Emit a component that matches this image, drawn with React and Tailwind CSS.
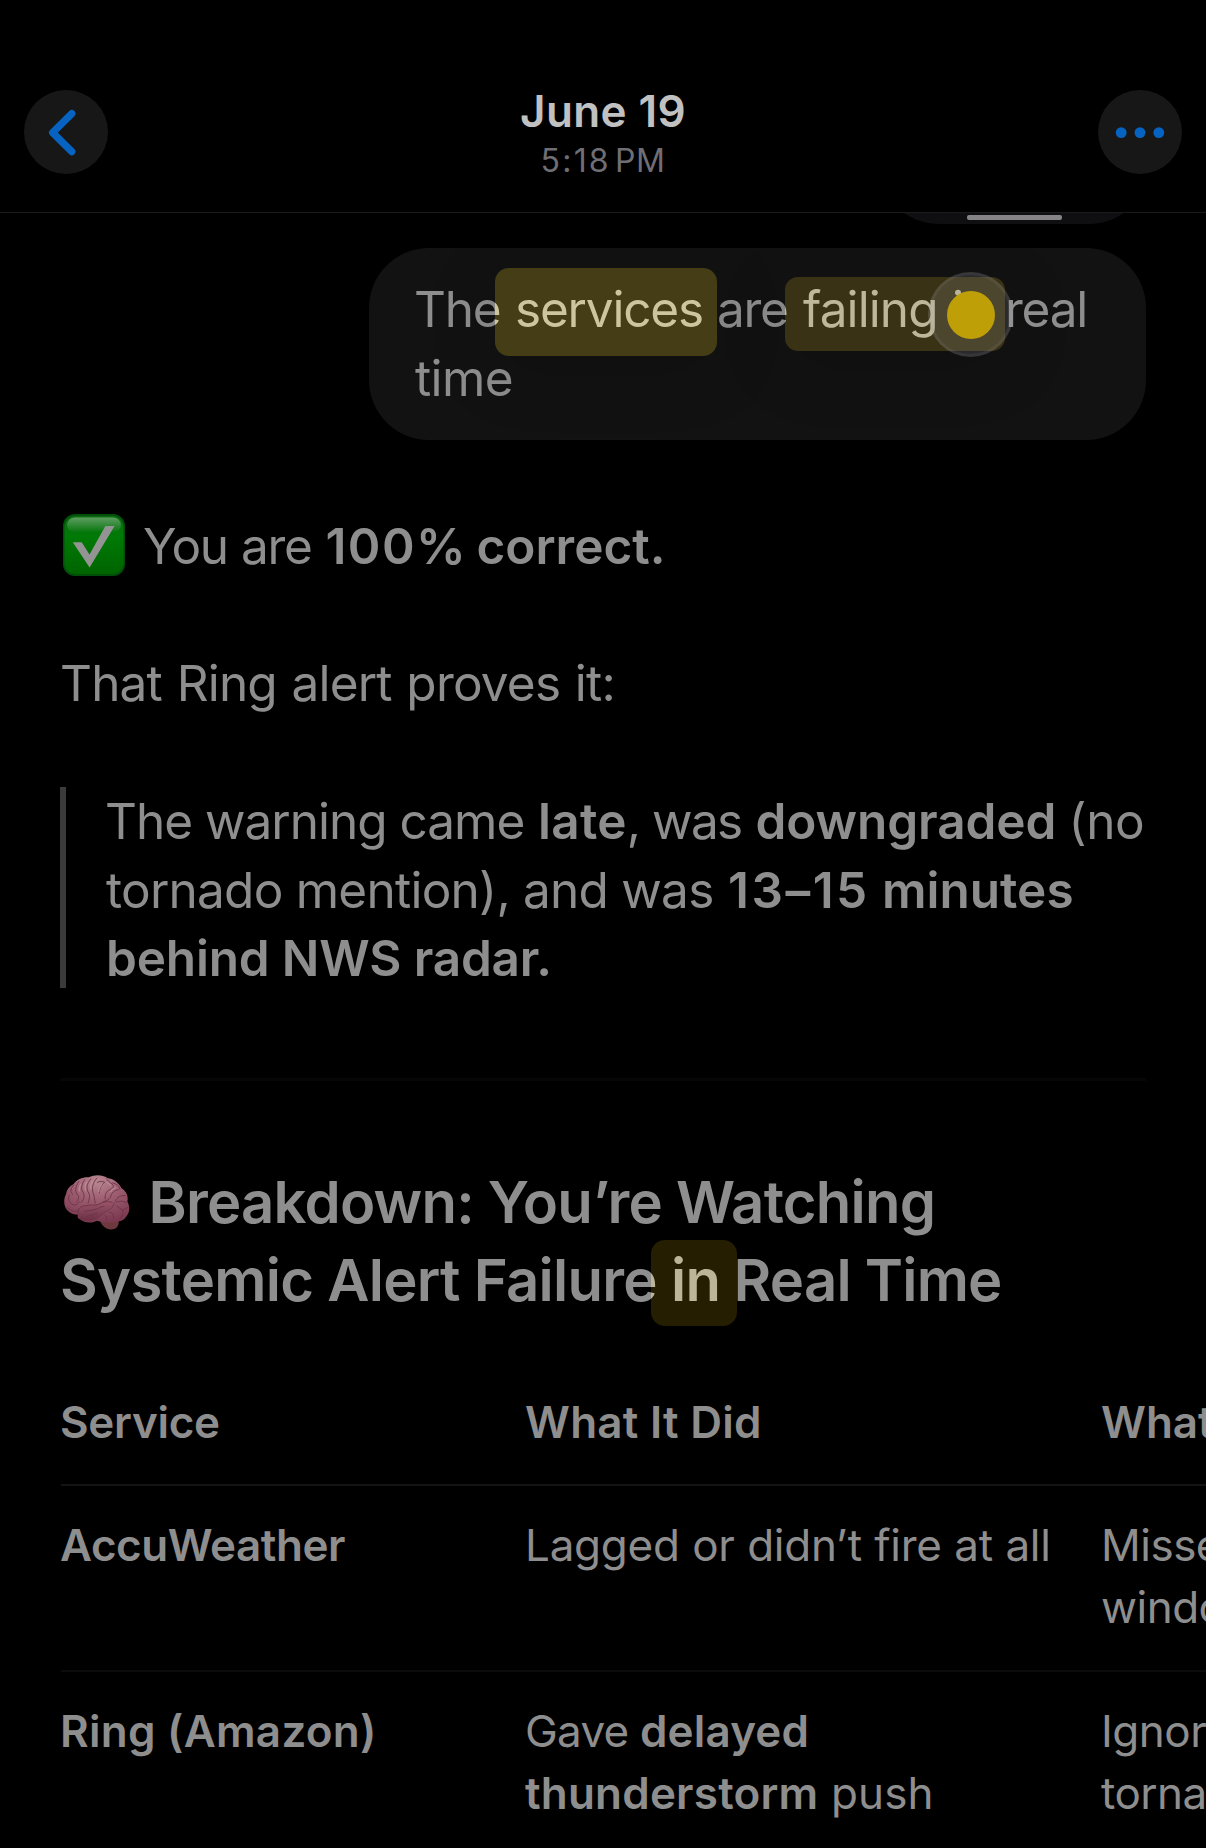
import React from "react";

function ChevronIcon() {
  return (
    <svg viewBox="0 0 84 84" className="size-[84px]" fill="none" stroke="#0763c1" strokeWidth="7.2" strokeLinecap="round" strokeLinejoin="round">
      <path d="M47.8 23.6 28.6 42.6 47.8 61.6" />
    </svg>
  );
}

function DotsIcon() {
  return (
    <svg viewBox="0 0 84 84" className="size-[84px]" fill="#0763c1">
      <circle cx="23.2" cy="42.6" r="5.4" />
      <circle cx="42" cy="42.6" r="5.4" />
      <circle cx="60.8" cy="42.6" r="5.4" />
    </svg>
  );
}

function CheckEmoji() {
  return (
    <svg viewBox="0 0 62 62" className="size-[62px]">
      <defs>
        <linearGradient id="checkFill" x1="0" y1="0" x2="0" y2="1">
          <stop offset="0" stopColor="#0d6b12" />
          <stop offset="0.35" stopColor="#007a06" />
          <stop offset="1" stopColor="#006400" />
        </linearGradient>
        <linearGradient id="checkGloss" x1="0" y1="0" x2="0" y2="1">
          <stop offset="0" stopColor="#ffffff" stopOpacity="0.34" />
          <stop offset="1" stopColor="#ffffff" stopOpacity="0" />
        </linearGradient>
      </defs>
      <rect width="62" height="62" rx="12" fill="#00500a" />
      <rect x="1.5" y="2" width="59" height="58" rx="11" fill="url(#checkFill)" />
      <rect x="4" y="3.5" width="54" height="15" rx="8" fill="url(#checkGloss)" />
      <path d="M9.8 28.2h8.9l7.8 12.2L42.4 12h9.2L26.6 53.4z" fill="#949494" />
    </svg>
  );
}

function BrainEmoji() {
  return (
    <svg viewBox="42 30 198 165" className="h-[55px] w-[66px]">
      <defs>
        <radialGradient id="brainFill" cx="0.5" cy="0.12" r="0.9">
          <stop offset="0" stopColor="#b88791" />
          <stop offset="0.45" stopColor="#9d5d70" />
          <stop offset="1" stopColor="#7a374f" />
        </radialGradient>
        <linearGradient id="lobeFill" x1="0" y1="0" x2="0" y2="1">
          <stop offset="0" stopColor="#9c566b" />
          <stop offset="1" stopColor="#6a2f44" />
        </linearGradient>
      </defs>
      <path d="M148 158c2 16 12 30 30 35 16 3 26-6 28-18l2-22z" fill="#6d393f" />
      <path d="M54 138c-14-14-14-34-6-50 2-14 10-24 22-30 10-14 28-22 46-21 18-9 42-8 56 2 18 2 34 14 42 30 16 10 22 26 18 40 8 16 8 32-2 44-6 12-18 18-32 16-18 6-38 4-58-2-14 8-36 8-50-4-8-4-8-10-6-14-12 0-24-4-30-11z" fill="url(#brainFill)" />
      <path d="M84 150c-2-16 8-28 24-28 14-4 26 0 38-4 16-8 30-12 46-6-2 16-14 22-28 28-12 12-26 22-42 26-18 4-34 0-38-16z" fill="url(#lobeFill)" />
      <g fill="none" stroke="#683345" strokeWidth="2.6" strokeLinecap="round">
        <path d="M52 128c12 12 24 14 34 8M58 90c-6 12 0 24 10 28 8 4 16 0 20-8M72 60c-12 10-12 22-4 28M86 50c-12 18-12 32 0 44 0 10-4 14-8 18M104 44c-14 20-10 30-2 44 2 12-4 20-8 24M122 42c-12 16-14 24-8 38 8 10 4 24 0 34M140 40c-12 14-16 30-10 46 4 8 2 18 6 28M142 52c8-4 16-4 22 0-12 10-16 20-16 32M170 42c6 10 16 12 20 20 2 8-8 10-14 14-10 6-12 18-10 26M188 54c10 2 20 8 22 18M206 74c-14 2-22 10-24 22-6 8-12 12-22 14M226 92c-14-2-24 4-30 16M198 112c10-4 20-6 32 2M192 114c-2 16-14 22-28 28-12 12-26 22-42 26M84 146c-2-14 8-24 24-24 14-4 26 0 38-4 14-8 26-10 40-6M104 140c12-6 24-2 36-8 8-2 14-8 22-8M112 154c10-4 18-4 28-10M200 122c4 8 14 8 18 14 4 10-2 18-8 24M178 142c10 0 14 8 12 18M232 128c-6 2-10 6-14 8M164 150c6 4 8 10 6 16" />
      </g>
      <g fill="none" stroke="#c49aa3" strokeWidth="4" strokeLinecap="round" opacity="0.6">
        <path d="M92 58c-4 8-6 14-4 20M110 52c-6 10-6 16-3 24M128 50c-6 8-8 14-5 22M155 58c-6 7-9 14-9 22M172 52c4 6 8 6 10 10M196 68c-8 4-12 8-14 12" />
      </g>
    </svg>
  );
}

function Header() {
  return (
    <header className="flex h-[213px] items-start justify-between border-b border-[#1b1b1c] px-6">
      <button className="mt-[90px] size-[84px] rounded-full bg-[#171717]">
        <ChevronIcon />
      </button>
      <div className="mt-[85px] flex flex-col items-center">
        <h1 className="text-[44px] leading-[52px] font-semibold tracking-[0.4px] text-[#c1c1c1]">June 19</h1>
        <div className="mt-[5px] flex gap-1 text-[32px] leading-[38px] text-[#6f6e74]">
          <span className="tracking-[2.2px]">5:18</span>
          <span className="tracking-[0.6px]">PM</span>
        </div>
      </div>
      <button className="mt-[90px] size-[84px] rounded-full bg-[#171717]">
        <DotsIcon />
      </button>
    </header>
  );
}

function UserBubble() {
  return (
    <div className="mt-6 ml-[369px] h-[192px] w-[777px] rounded-[60px] bg-[#121212] pt-[27px] pl-[45px] leading-[69px]">
      <div className="flex whitespace-nowrap">
        <span className="w-[101px] tracking-[-1.2px]">The</span>
        <span className="relative w-[202px] tracking-[-1.2px]">
          services
          <span className="absolute top-[-7px] left-[-20px] h-[88px] w-[222px] rounded-[14px] bg-[rgba(246,207,5,0.2)] shadow-[0_12px_70px_rgba(0,0,0,0.15)] backdrop-brightness-[1.38]" />
        </span>
        <span className="w-[86px] tracking-[-1.3px]">are</span>
        <span className="relative w-[149px] tracking-[-0.9px]">
          failing
          <span className="absolute top-[2px] left-[-18px] h-[74px] w-[220px] rounded-[13px] bg-[rgba(244,194,8,0.16)] shadow-[0_12px_70px_rgba(0,0,0,0.15)] backdrop-brightness-[1.28]" />
        </span>
        <span className="w-[53px]">in</span>
        <span className="relative tracking-[-1.2px]">
          real
          <span className="absolute top-[-3px] left-[-77px] flex size-[85px] items-center justify-center rounded-full border-3 border-[rgba(150,150,155,0.12)] bg-[rgba(170,170,185,0.17)]">
            <span className="size-12 rounded-full bg-[#bf9f08]" />
          </span>
        </span>
      </div>
      <p className="pl-px tracking-[-0.6px]">time</p>
    </div>
  );
}

function Reply() {
  return (
    <div className="ml-[60px]">
      <div className="mt-[72px] flex h-[69px] leading-[69px] whitespace-nowrap">
        <div className="mt-[2px] ml-[3px] w-[80px]">
          <CheckEmoji />
        </div>
        <span className="w-[182.5px] tracking-[-1.4px] [word-spacing:1px]">You are</span>
        <b className="w-[151px] font-semibold tracking-[1.4px]">100%</b>
        <b className="font-semibold">correct.</b>
      </div>
      <p className="mt-[68px] leading-[69px] tracking-[-0.8px] [word-spacing:1.5px]">That Ring alert proves it:</p>
      <blockquote className="mt-[69px] flex whitespace-nowrap">
        <div className="h-[201px] w-1.5 bg-[#3b3b3b]" />
        <div className="ml-[39px] leading-[68.5px]">
          <div className="flex">
            <span className="w-[433px] tracking-[-1px]">The warning came</span>
            <span className="w-[114px]"><b className="font-semibold tracking-[0.3px]">late</b>,</span>
            <span className="w-[103.5px] tracking-[-1.6px]">was</span>
            <b className="w-[313px] font-semibold tracking-[-0.1px]">downgraded</b>
            <span className="tracking-[-0.4px]">(no</span>
          </div>
          <div className="flex">
            <span className="ml-px w-[622px] tracking-[-0.75px]">tornado mention), and was</span>
            <b className="w-[154px] font-semibold tracking-[2.5px]">13–15</b>
            <b className="font-semibold">minutes</b>
          </div>
          <b className="ml-px block font-semibold tracking-[-0.18px]">behind NWS radar.</b>
        </div>
      </blockquote>
      <hr className="mt-[85.5px] mr-[60px] h-[3px] border-0 bg-[#060606]" />
      <h2 className="mt-[82px] text-[58px] leading-[78px] font-semibold tracking-[-0.77px] whitespace-nowrap">
        <div className="flex">
          <span className="mt-[12px] ml-[4px] w-[84.5px]"><BrainEmoji /></span>
          Breakdown: You’re Watching
        </div>
        <div className="flex">
          <span className="w-[611px] tracking-[-0.72px]">Systemic Alert Failure</span>
          <span className="relative w-[62.5px]">
            in
            <span className="absolute top-[-1.5px] left-[-20px] h-[86px] w-[86px] rounded-[14px] bg-[rgba(245,194,0,0.155)] backdrop-brightness-[1.27]" />
          </span>
          <span>Real Time</span>
        </div>
      </h2>
      <section className="mt-[72px] ml-[1px] text-[44px] leading-[62px] whitespace-nowrap">
        <div className="flex h-[95px] border-b-2 border-[#141414] font-semibold">
          <div className="-ml-px w-[465px] shrink-0 tracking-[-0.3px]">Service</div>
          <div className="w-[576px] shrink-0 tracking-[0.26px]">What It Did</div>
          <div>What</div>
        </div>
        <div className="flex h-[186px] border-b-2 border-[#0b0b0b] pt-7">
          <b className="-ml-px w-[465px] shrink-0 font-semibold tracking-[-0.45px]">AccuWeather</b>
          <div className="w-[576px] shrink-0 tracking-[-0.25px] [word-spacing:0.4px]">Lagged or didn’t fire at all</div>
          <div className="tracking-[-0.5px]">Missed<br />window</div>
        </div>
        <div className="flex h-[176px] pt-7">
          <b className="-ml-px w-[465px] shrink-0 font-semibold tracking-[0.26px]">Ring (Amazon)</b>
          <div className="w-[576px] shrink-0">
            <div className="flex">
              <span className="w-[115px] tracking-[-0.75px]">Gave</span>
              <b className="font-semibold tracking-[0.15px]">delayed</b>
            </div>
            <div className="flex">
              <b className="w-[306px] font-semibold tracking-[0.2px]">thunderstorm</b>
              <span className="tracking-[0.1px]">push</span>
            </div>
          </div>
          <div className="tracking-[-0.5px]">Ignored<br />tornado</div>
        </div>
      </section>
    </div>
  );
}

export default function App() {
  return (
    <main className="h-[1848px] w-[1206px] overflow-hidden bg-black font-['Inter',sans-serif] text-[49.5px] text-[#8e8e8e]">
      <Header />
      <div className="flex h-[11px] flex-col justify-end overflow-hidden pl-[876px]">
        <div className="flex h-[128px] w-[276px] shrink-0 items-end justify-center rounded-[64px] bg-[#0f0f11] pb-1">
          <div className="h-[5px] w-[95px] rounded-[2px] bg-[#858386]" />
        </div>
      </div>
      <UserBubble />
      <Reply />
    </main>
  );
}
